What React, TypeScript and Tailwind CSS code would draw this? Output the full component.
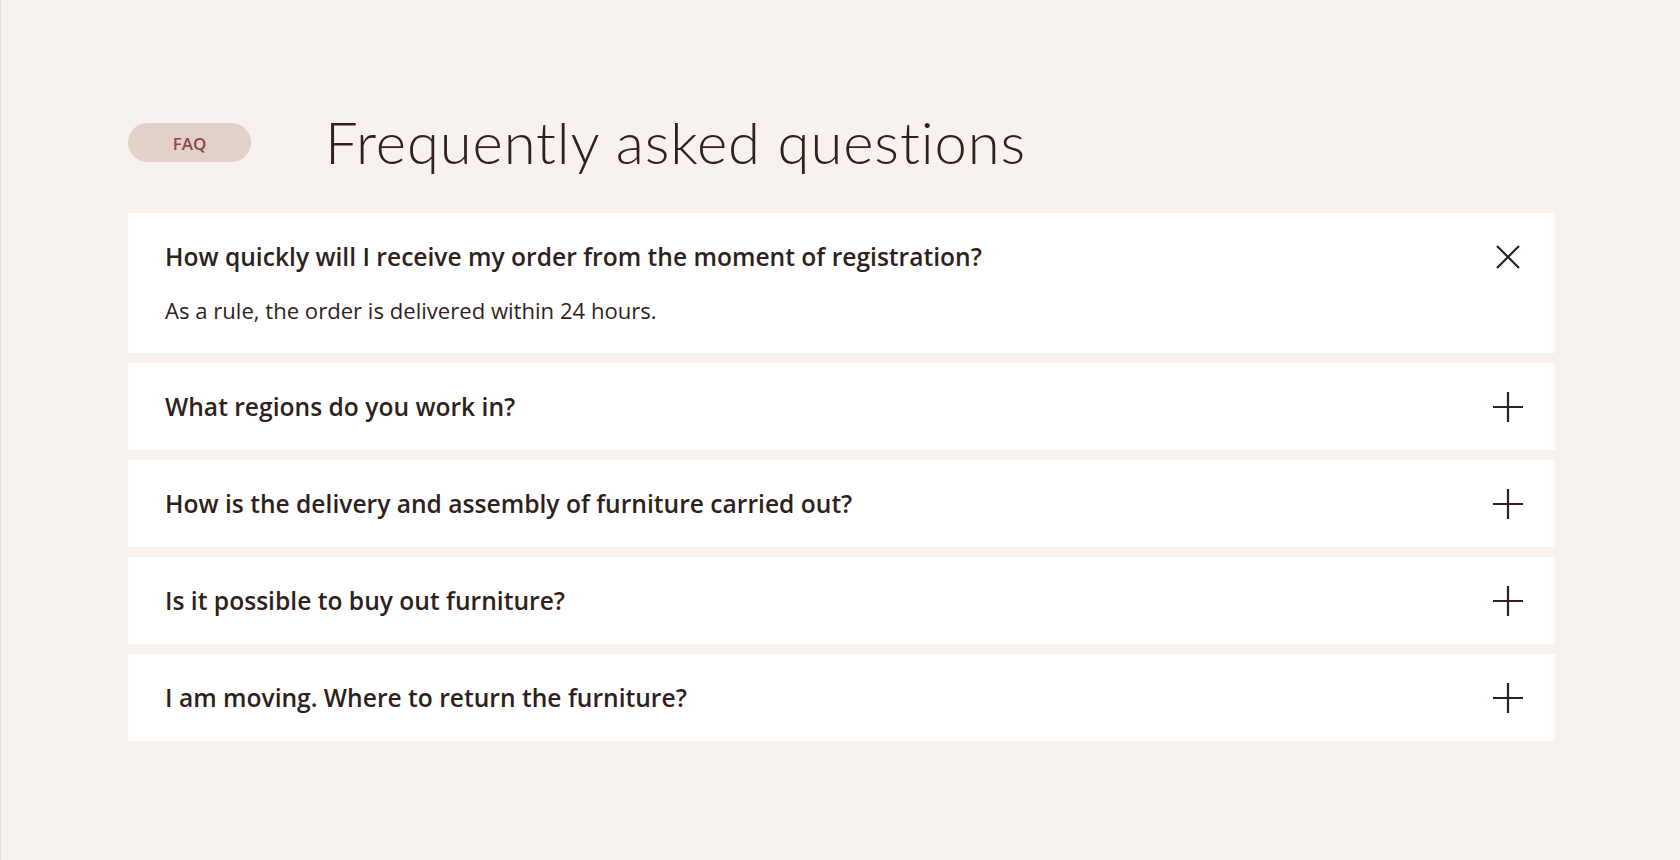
import { useState } from "react";

const faqs = [
  {
    q: "How quickly will I receive my order from the moment of registration?",
    a: "As a rule, the order is delivered within 24 hours.",
  },
  { q: "What regions do you work in?", a: "We deliver across the whole country." },
  {
    q: "How is the delivery and assembly of furniture carried out?",
    a: "Our team brings the furniture and assembles it on site.",
  },
  { q: "Is it possible to buy out furniture?", a: "Yes, you can buy out any rented item." },
  {
    q: "I am moving. Where to return the furniture?",
    a: "Contact us and we will arrange a pickup.",
  },
];

function ToggleIcon({ open }: { open: boolean }) {
  return (
    <svg width="32" height="32" viewBox="0 0 32 32" fill="none" stroke="#2f1f1d" strokeWidth="2.2">
      {open ? (
        <path d="M5 5 L27 27 M27 5 L5 27" />
      ) : (
        <path d="M16 1 V31 M1 16 H31" />
      )}
    </svg>
  );
}

export default function App() {
  const [openIndex, setOpenIndex] = useState<number | null>(0);

  return (
    <div className="min-h-[860px] bg-[#f7f2ed] border-l border-[#e2ddd9] font-['Open_Sans',sans-serif] text-[#2f1f1d]">
      <div className="pl-[127px] pr-[125px] pt-[108px]">
        <div className="flex items-center mb-[37px]">
          <span className="flex items-center justify-center w-[123px] h-[39px] pt-[3px] rounded-full bg-[#e3d0ca] text-[#8b4b43] text-[17px] font-semibold">
            FAQ
          </span>
          <h2 className="ml-[74px] text-[58px] leading-[68px] font-light tracking-[0.9px] font-['Lato',sans-serif]">
            Frequently asked questions
          </h2>
        </div>

        <div className="flex flex-col gap-[10px]">
          {faqs.map((item, index) => {
            const open = openIndex === index;
            return (
              <div key={index} className="bg-white pl-[37px] pr-[31px]">
                <button
                  onClick={() => setOpenIndex(open ? null : index)}
                  className="w-full flex items-center justify-between text-left h-[87px] cursor-pointer"
                >
                  <span className="text-[24.6px] leading-[32px] font-semibold">{item.q}</span>
                  <ToggleIcon open={open} />
                </button>
                {open && (
                  <p className="-mt-[5px] pb-[28px] text-[22.1px] leading-[30px]">{item.a}</p>
                )}
              </div>
            );
          })}
        </div>
      </div>
    </div>
  );
}
